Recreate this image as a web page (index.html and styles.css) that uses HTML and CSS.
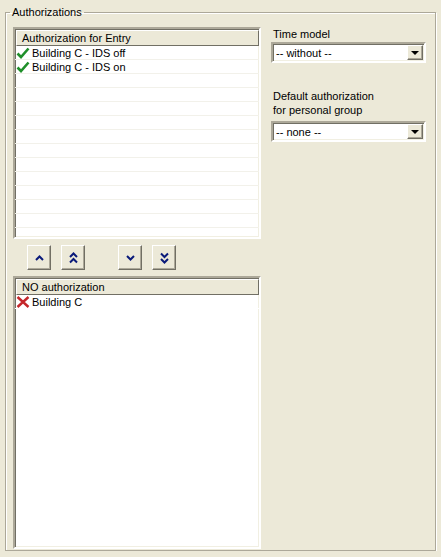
FILE: index.html
```html
<!DOCTYPE html>
<html lang="en">
<head>
  <meta charset="UTF-8">
  <title>Authorizations</title>
  <link rel="stylesheet" href="styles.css">
</head>
<body>
  <fieldset class="group">
    <legend>Authorizations</legend>
    <div class="columns">
      <div class="left">
        <div class="list list-top">
          <div class="list-head">Authorization for Entry</div>
          <div class="list-body">
            <div class="row">
              <svg class="ico" width="14" height="12" viewBox="0 0 14 12"><path d="M1.5 6.5 L5 10 L12.5 1.5" fill="none" stroke="#1f8f2a" stroke-width="2.6"/></svg>
              <span>Building C - IDS off</span>
            </div>
            <div class="row">
              <svg class="ico" width="14" height="12" viewBox="0 0 14 12"><path d="M1.5 6.5 L5 10 L12.5 1.5" fill="none" stroke="#1f8f2a" stroke-width="2.6"/></svg>
              <span>Building C - IDS on</span>
            </div>
            <div class="row"></div>
            <div class="row"></div>
            <div class="row"></div>
            <div class="row"></div>
            <div class="row"></div>
            <div class="row"></div>
            <div class="row"></div>
            <div class="row"></div>
            <div class="row"></div>
            <div class="row"></div>
            <div class="row"></div>
            <div class="row"></div>
          </div>
        </div>

        <div class="movers">
          <div class="mover-group">
            <button class="mover" title="Up">
              <svg width="9" height="6" viewBox="0 0 9 6"><path d="M1 5 L4.5 1.5 L8 5" fill="none" stroke="#0a1a7a" stroke-width="2"/></svg>
            </button>
            <button class="mover" title="All up">
              <svg width="9" height="12" viewBox="0 0 9 12"><path d="M1 5 L4.5 1.5 L8 5 M1 10.5 L4.5 7 L8 10.5" fill="none" stroke="#0a1a7a" stroke-width="2"/></svg>
            </button>
          </div>
          <div class="mover-group">
            <button class="mover" title="Down">
              <svg width="9" height="6" viewBox="0 0 9 6"><path d="M1 1 L4.5 4.5 L8 1" fill="none" stroke="#0a1a7a" stroke-width="2"/></svg>
            </button>
            <button class="mover" title="All down">
              <svg width="9" height="12" viewBox="0 0 9 12"><path d="M1 1.5 L4.5 5 L8 1.5 M1 7 L4.5 10.5 L8 7" fill="none" stroke="#0a1a7a" stroke-width="2"/></svg>
            </button>
          </div>
        </div>

        <div class="list list-bottom">
          <div class="list-head">NO authorization</div>
          <div class="list-body">
            <div class="row">
              <svg class="ico" width="14" height="12" viewBox="0 0 14 12"><path d="M1.5 1 L12.5 11 M12.5 1 L1.5 11" fill="none" stroke="#c4262a" stroke-width="2.4"/></svg>
              <span>Building C</span>
            </div>
          </div>
        </div>
      </div>

      <div class="right">
        <label class="field-label">Time model</label>
        <div class="combo">
          <span class="combo-text">-- without --</span>
          <span class="combo-btn"><span class="tri"></span></span>
        </div>

        <label class="field-label label-two">Default authorization<br>for personal group</label>
        <div class="combo">
          <span class="combo-text">-- none --</span>
          <span class="combo-btn"><span class="tri"></span></span>
        </div>
      </div>
    </div>
  </fieldset>
</body>
</html>
```

FILE: styles.css
```css
body {
  margin: 0;
  background: #ece9d8;
  font-family: "Liberation Sans", Arial, sans-serif;
  font-size: 11px;
  color: #000;
}
.group {
  margin: 6px 5px 0 5px;
  padding: 8px 5px 1px 7px;
  border: 1px solid #aca899;
  box-shadow: inset 1px 1px 0 #fff, 1px 1px 0 #fff;
  min-width: 0;
}
.group legend {
  padding: 0 2px;
  margin-left: -3px;
  line-height: 13px;
}
.columns {
  display: flex;
  gap: 10px;
}
.left {
  width: 248px;
}
.right {
  width: 155px;
  display: flex;
  flex-direction: column;
}

/* list views */
.list {
  background: #fff;
  border-style: solid;
  border-width: 2px;
  border-color: #aca899 #fff #fff #aca899;
  box-shadow: inset 1px 1px 0 #716f64, inset -1px -1px 0 #f1efe2;
  box-sizing: border-box;
  overflow: hidden;
}
.list-top {
  height: 212px;
}
.list-bottom {
  height: 273px;
}
.list-head {
  margin: 1px 0 0 1px;
  height: 15px;
  line-height: 14px;
  padding-left: 5px;
  background: #ece9d8;
  border-top: 1px solid #fff;
  border-left: 1px solid #fff;
  border-bottom: 1px solid #716f64;
  border-right: 1px solid #716f64;
  box-sizing: border-box;
  height: 16px;
}
.row {
  height: 14px;
  display: flex;
  align-items: center;
  border-bottom: 1px solid #f2f1ea;
  box-sizing: border-box;
  padding-left: 1px;
  gap: 2px;
  white-space: nowrap;
}
.list-bottom .row {
  border-bottom-color: #fff;
}
.ico {
  flex: none;
}

/* move buttons */
.movers {
  display: flex;
  gap: 33px;
  padding-left: 14px;
  margin: 6px 0;
}
.mover-group {
  display: flex;
  gap: 10px;
}
.mover {
  width: 24px;
  height: 25px;
  padding: 0;
  margin: 0;
  background: #ece9d8;
  border-style: solid;
  border-width: 1px;
  border-color: #fff #716f64 #716f64 #fff;
  box-shadow: inset -1px -1px 0 #aca899;
  display: flex;
  align-items: center;
  justify-content: center;
}

/* combo boxes */
.field-label {
  line-height: 14px;
  padding-left: 2px;
  margin-bottom: 1px;
}
.label-two {
  margin-top: 26px;
  margin-bottom: 4px;
}
.combo {
  height: 21px;
  box-sizing: border-box;
  background: #fff;
  border-style: solid;
  border-width: 2px;
  border-color: #aca899 #fff #fff #aca899;
  box-shadow: inset 1px 1px 0 #716f64, inset -1px -1px 0 #f1efe2;
  display: flex;
  align-items: center;
  padding: 1px;
}
.combo-text {
  flex: 1;
  padding-left: 2px;
}
.combo-btn {
  width: 16px;
  height: 15px;
  box-sizing: border-box;
  background: #ece9d8;
  border-style: solid;
  border-width: 1px;
  border-color: #fff #716f64 #716f64 #fff;
  box-shadow: inset -1px -1px 0 #aca899;
  display: flex;
  align-items: center;
  justify-content: center;
}
.tri {
  width: 0;
  height: 0;
  border-left: 4px solid transparent;
  border-right: 4px solid transparent;
  border-top: 4px solid #000;
  margin-top: 1px;
}
```
